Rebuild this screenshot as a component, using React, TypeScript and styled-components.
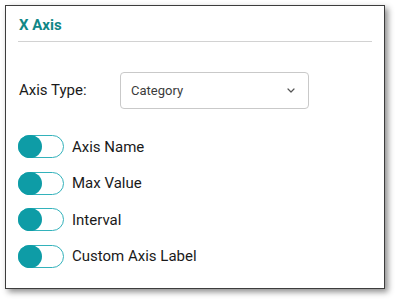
import React from "react";
import styled, { createGlobalStyle } from "styled-components";

const Global = createGlobalStyle`
  html, body { margin: 0; padding: 0; background: #ffffff; }
  body { font-family: Roboto, "Liberation Sans", sans-serif; }
  * { box-sizing: border-box; }
`;

const Page = styled.div`
  padding: 5px;
  width: 398px;
  height: 302px;
`;

const Card = styled.div`
  width: 380px;
  height: 284px;
  border: 1.5px solid #3d3d3d;
  background: #fff;
  box-shadow: 3px 3px 6px rgba(0, 0, 0, 0.45);
  padding: 0 12px;
  display: flex;
  flex-direction: column;
`;

const Title = styled.h2`
  margin: 0;
  padding: 9.5px 1px 7px;
  font-size: 15px;
  line-height: 18px;
  font-weight: 700;
  color: #108787;
  border-bottom: 1px solid #d2d2d2;
`;

const TypeRow = styled.div`
  display: flex;
  align-items: center;
  margin-top: 30px;
  padding-left: 1px;
`;

const FieldLabel = styled.span`
  width: 101px;
  font-size: 15px;
  color: #1a1a1a;
`;

const Select = styled.div`
  width: 189px;
  height: 37px;
  border: 1px solid #c9c9c9;
  border-radius: 4px;
  display: flex;
  align-items: center;
  justify-content: space-between;
  padding: 0 13px 0 10px;
  font-size: 13px;
  color: #3c3c3c;
`;

const Toggles = styled.div`
  display: flex;
  flex-direction: column;
  gap: 13.5px;
  margin-top: 26.5px;
`;

const ToggleRow = styled.div`
  display: flex;
  align-items: center;
  gap: 8px;
`;

const Track = styled.div`
  position: relative;
  width: 46px;
  height: 23px;
  border: 1px solid #33b2bb;
  border-radius: 12px;
  background: #fff;
`;

const Knob = styled.div`
  position: absolute;
  left: -1px;
  top: -1px;
  width: 24px;
  height: 23px;
  border-radius: 50%;
  background: #0e9ca6;
`;

const ToggleLabel = styled.span`
  font-size: 15px;
  color: #1a1a1a;
`;

const Chevron = () => (
  <svg width="8" height="5" viewBox="0 0 8 5" fill="none">
    <path d="M1 1l3 3 3-3" stroke="#555" strokeWidth="1.2" strokeLinecap="round" strokeLinejoin="round" />
  </svg>
);

const items = ["Axis Name", "Max Value", "Interval", "Custom Axis Label"];

export default function App() {
  return (
    <>
      <Global />
      <Page>
        <Card>
          <Title>X Axis</Title>
          <TypeRow>
            <FieldLabel>Axis Type:</FieldLabel>
            <Select>
              <span>Category</span>
              <Chevron />
            </Select>
          </TypeRow>
          <Toggles>
            {items.map((t) => (
              <ToggleRow key={t}>
                <Track>
                  <Knob />
                </Track>
                <ToggleLabel>{t}</ToggleLabel>
              </ToggleRow>
            ))}
          </Toggles>
        </Card>
      </Page>
    </>
  );
}
